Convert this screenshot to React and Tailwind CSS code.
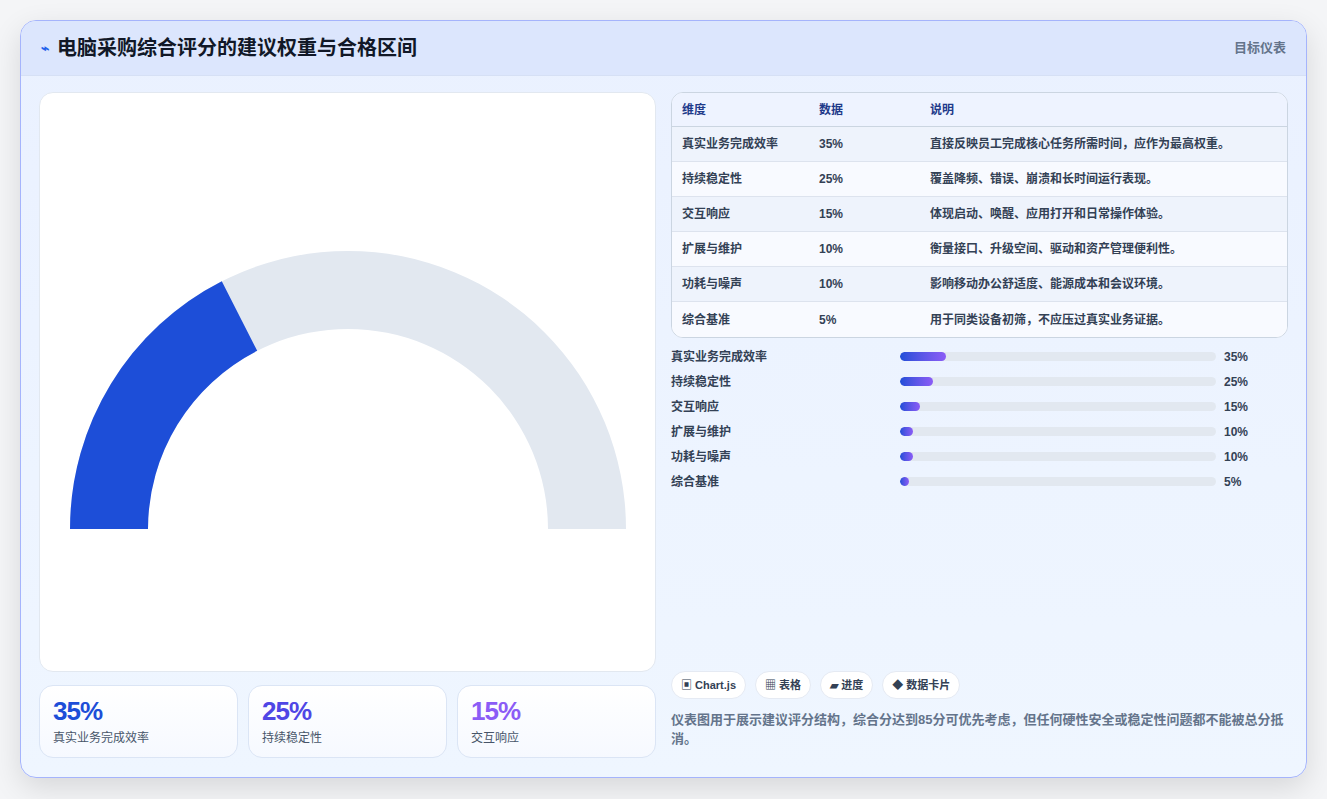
import React from "react";

const rows = [
  ["真实业务完成效率", "35%", "直接反映员工完成核心任务所需时间，应作为最高权重。", 35],
  ["持续稳定性", "25%", "覆盖降频、错误、崩溃和长时间运行表现。", 25],
  ["交互响应", "15%", "体现启动、唤醒、应用打开和日常操作体验。", 15],
  ["扩展与维护", "10%", "衡量接口、升级空间、驱动和资产管理便利性。", 10],
  ["功耗与噪声", "10%", "影响移动办公舒适度、能源成本和会议环境。", 10],
  ["综合基准", "5%", "用于同类设备初筛，不应压过真实业务证据。", 5],
];

function Gauge() {
  const cx = 308, cy = 436, R = 278, r = 200;
  const a = Math.PI - Math.PI * 0.35;
  const ox = cx + R * Math.cos(a), oy = cy - R * Math.sin(a);
  const ix = cx + r * Math.cos(a), iy = cy - r * Math.sin(a);
  return (
    <svg width="617" height="580" viewBox="0 0 617 580" className="block">
      <path d={`M ${cx - R} ${cy} A ${R} ${R} 0 0 1 ${cx + R} ${cy} L ${cx + r} ${cy} A ${r} ${r} 0 0 0 ${cx - r} ${cy} Z`} fill="#e2e8f0" />
      <path d={`M ${cx - R} ${cy} A ${R} ${R} 0 0 1 ${ox} ${oy} L ${ix} ${iy} A ${r} ${r} 0 0 0 ${cx - r} ${cy} Z`} fill="#1d4ed8" />
    </svg>
  );
}

export default function App() {
  return (
    <div className="w-[1327px] h-[799px] bg-[#f4f5f7] pt-[20px] px-[20px]" style={{ fontFamily: '"Liberation Sans","Noto Sans CJK SC",sans-serif' }}>
      <div className="w-[1287px] h-[758px] rounded-[16px] border border-[#a5b4fc] overflow-hidden bg-gradient-to-b from-[#eaf1ff] to-[#eff6ff] shadow-[0_10px_30px_rgba(0,0,0,0.12)] flex flex-col">
        <div className="h-[55px] shrink-0 bg-[#dce6fd] flex items-center justify-between px-[20px] border-b border-[#d6e0f5]">
          <div className="flex items-center gap-[8px]">
            <span className="text-[#2563eb] text-[14px] font-bold">⌁</span>
            <span className="text-[20px] font-bold text-[#111827]">电脑采购综合评分的建议权重与合格区间</span>
          </div>
          <span className="text-[13px] text-[#64748b] font-semibold">目标仪表</span>
        </div>
        <div className="flex gap-[15px] pl-[18px] pr-[18px] pt-[16px]">
          <div className="w-[617px] flex flex-col gap-[13px]">
            <div className="h-[580px] bg-white rounded-[14px] border border-[#e2e8f0] overflow-hidden">
              <Gauge />
            </div>
            <div className="grid grid-cols-3 gap-[10px]">
              {[["35%", "真实业务完成效率", "text-[#1d4ed8]"], ["25%", "持续稳定性", "text-[#4f46e5]"], ["15%", "交互响应", "text-[#8b5cf6]"]].map(([v, l, c]) => (
                <div key={l} className="h-[73px] rounded-[14px] border border-[#dbe5f5] bg-gradient-to-b from-white to-[#f6f9ff] px-[13px] pt-[10px]">
                  <div className={`text-[26px] leading-[30px] font-bold tracking-[-1px] ${c}`}>{v}</div>
                  <div className="text-[12px] text-[#475569] mt-[3px]">{l}</div>
                </div>
              ))}
            </div>
          </div>
          <div className="w-[617px] flex flex-col">
            <div className="rounded-[12px] border border-[#cbd5e1] overflow-hidden bg-white">
              <div className="h-[34px] flex items-center bg-[#eef3ff] border-b border-[#cbd5e1] text-[12px] font-bold text-[#1e3a8a]">
                <div className="w-[147px] pl-[10px]">维度</div>
                <div className="w-[111px]">数据</div>
                <div>说明</div>
              </div>
              {rows.map((r, i) => (
                <div key={r[0]} className={`h-[35px] flex items-center text-[12px] font-semibold text-[#334155] ${i % 2 === 0 ? "bg-[#eef3fc]" : "bg-[#f8faff]"} ${i < 5 ? "border-b border-[#dde3ee]" : ""}`}>
                  <div className="w-[147px] pl-[10px]">{r[0]}</div>
                  <div className="w-[111px]">{r[1]}</div>
                  <div>{r[2]}</div>
                </div>
              ))}
            </div>
            <div className="flex flex-col gap-[8px] mt-[10px]">
              {rows.map((r) => (
                <div key={r[0]} className="h-[17px] flex items-center text-[12px] font-semibold text-[#334155]">
                  <div className="w-[229px]">{r[0]}</div>
                  <div className="w-[316px] h-[9px] rounded-full bg-[#e2e8f0] overflow-hidden">
                    <div className="h-full rounded-full bg-gradient-to-r from-[#1d4ed8] to-[#8b5cf6]" style={{ width: `${Math.max(r[3] * 0.418, 3)}%` }} />
                  </div>
                  <div className="ml-[8px]">{r[1]}</div>
                </div>
              ))}
            </div>
            <div className="flex gap-[9px] mt-[181px]">
              {["▣ Chart.js", "▦ 表格", "▰ 进度", "◆ 数据卡片"].map((t) => (
                <span key={t} className="h-[28px] px-[9px] rounded-full bg-white border border-[#e5eaf3] text-[11px] font-semibold text-[#334155] flex items-center">{t}</span>
              ))}
            </div>
            <p className="mt-[11px] text-[13px] leading-[19px] text-[#64748b] font-semibold">仪表图用于展示建议评分结构，综合分达到85分可优先考虑，但任何硬性安全或稳定性问题都不能被总分抵消。</p>
          </div>
        </div>
      </div>
    </div>
  );
}
